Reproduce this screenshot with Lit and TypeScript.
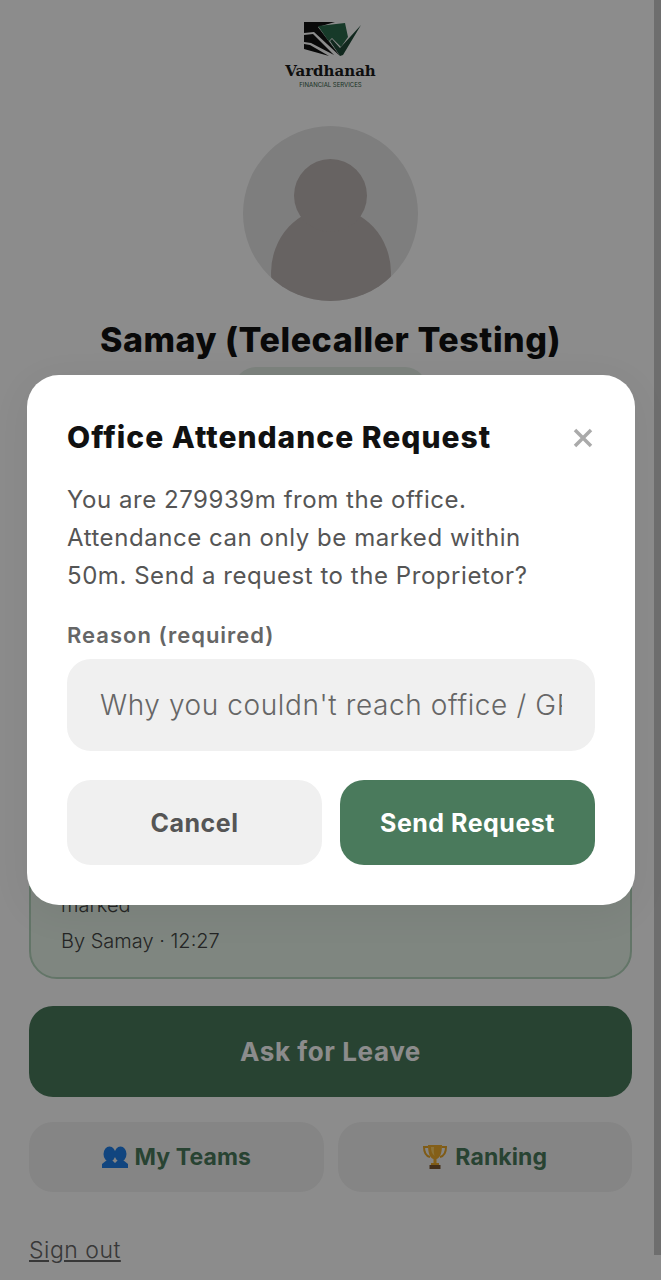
import { LitElement, html, css } from 'lit';
import { customElement } from 'lit/decorators.js';

const logo = html`<svg class="logo-mark" viewBox="0 0 64 40" aria-hidden="true">
  <path fill="#111" d="M3 2H34L17 7L39 36L13 12L3 13Z"/>
  <path fill="#111" d="M3 15L12 14L33 35L10 23L3 22Z"/>
  <path fill="#111" d="M3 24L9 25L28 36L3 29Z"/>
  <path fill="#2a6a4c" d="M17 6L44 3L47 17L40 27L31 18L28 21L38 36Z"/>
  <path fill="#1f4a37" d="M29 21L31 19L39 28L60 5L42 35L39 36Z"/>
</svg>`;

const teams = html`<svg class="emoji" viewBox="0 0 26 26" aria-hidden="true">
  <g fill="#1f7fe8">
    <ellipse cx="7.5" cy="10" rx="6" ry="7.5"/>
    <ellipse cx="18.5" cy="10" rx="6" ry="7.5"/>
    <path d="M0 24V20L5 16H10L13 19L16 16H21L26 20V24Z"/>
  </g>
</svg>`;

const trophy = html`<svg class="emoji" viewBox="0 0 26 26" aria-hidden="true">
  <path fill="none" stroke="#e8a628" stroke-width="2" d="M6 3H2C2 9 4 12 8 13M20 3H24C24 9 22 12 18 13"/>
  <path fill="#f0ae2c" d="M6 1H20C20 9 18 14 14.5 15V19H11.5V15C8 14 6 9 6 1Z"/>
  <path fill="#ffd269" d="M9 3H12C11.5 7 12 10 12.5 12C10 10 9 7 9 3Z"/>
  <path fill="#e8a628" d="M9 19H17V21H9Z"/>
  <path fill="#7a5630" d="M7.5 21H18.5V25H7.5Z"/>
</svg>`;

@customElement('app-root')
export class AppRoot extends LitElement {
  static styles = css`
    :host {
      display: block;
      position: relative;
      height: 1280px;
      overflow: hidden;
      background: #fff;
      font-family: Inter, 'Noto Sans', sans-serif;
      color: #111;
    }

    .page {
      display: flex;
      flex-direction: column;
      align-items: center;
      padding: 20px 29px 0;
    }

    .brand {
      display: flex;
      flex-direction: column;
      align-items: center;
    }

    .logo-mark {
      display: block;
      width: 64px;
      height: 40px;
      margin-left: 4px;
    }

    .brand-name {
      margin-top: 1px;
      font-family: 'DejaVu Serif', serif;
      font-weight: 700;
      font-size: 15px;
      line-height: 20px;
      color: #1a1a1a;
    }

    .brand-sub {
      font-size: 6px;
      line-height: 8px;
      color: #2f5a45;
    }

    .avatar {
      position: relative;
      width: 175px;
      height: 175px;
      margin-top: 37px;
      border-radius: 50%;
      background: #e6e6e6;
      overflow: hidden;
    }

    .avatar .head,
    .avatar .body {
      position: absolute;
      background: #bcb4b2;
      border-radius: 50%;
    }

    .avatar .head {
      left: 51px;
      top: 33px;
      width: 73px;
      height: 73px;
    }

    .avatar .body {
      left: 28px;
      top: 82px;
      width: 120px;
      height: 130px;
    }

    h1 {
      margin: 19px 0 0;
      font-size: 34px;
      line-height: 40px;
      font-weight: 800;
      letter-spacing: 0.55px;
      white-space: nowrap;
    }

    .pill {
      width: 193px;
      height: 44px;
      margin-top: 7px;
      border-radius: 22px;
      background: #e3efe6;
    }

    .status {
      box-sizing: border-box;
      align-self: stretch;
      display: flex;
      flex-direction: column;
      justify-content: flex-end;
      height: 320px;
      margin-top: 248px;
      padding: 0 30px 18px;
      border: 2px solid #b5d6bd;
      border-radius: 28px;
      background: #e7f5e9;
      color: #444;
      font-size: 20px;
      font-weight: 300;
      line-height: 36px;
    }

    .leave {
      align-self: stretch;
      height: 91px;
      margin-top: 27px;
      border-radius: 24px;
      background: #4a7a5c;
      color: #fff;
      display: flex;
      align-items: center;
      justify-content: center;
      font-size: 26px;
      font-weight: 700;
      letter-spacing: 0.6px;
    }

    .links {
      align-self: stretch;
      display: grid;
      grid-template-columns: 1fr 1fr;
      gap: 14px;
      margin-top: 25px;
    }

    .link {
      height: 70px;
      border-radius: 24px;
      background: #f2f2f2;
      color: #4a7a5c;
      display: flex;
      align-items: center;
      justify-content: center;
      gap: 7px;
      font-size: 23px;
      font-weight: 700;
      letter-spacing: 0.1px;
    }

    .emoji {
      width: 26px;
      height: 26px;
      flex: none;
    }

    .signout {
      align-self: flex-start;
      margin-top: 40px;
      font-size: 23px;
      line-height: 36px;
      font-weight: 300;
      letter-spacing: 0.5px;
      color: #666;
      text-decoration: underline;
    }

    .scrim {
      position: absolute;
      inset: 0;
      background: rgba(0, 0, 0, 0.45);
    }

    .scrollbar {
      position: absolute;
      right: 0;
      top: 0;
      width: 7px;
      height: 1255px;
      background: #6e6e6e;
    }

    .modal {
      box-sizing: border-box;
      position: absolute;
      left: 27px;
      top: 375px;
      width: 608px;
      height: 530px;
      padding: 40px 40px 0;
      border-radius: 32px;
      background: #fff;
      box-shadow: 0 8px 40px rgba(0, 0, 0, 0.06);
    }

    .modal-head {
      display: flex;
      align-items: center;
      justify-content: space-between;
      height: 44px;
    }

    h2 {
      margin: 0;
      font-size: 30px;
      font-weight: 800;
      line-height: 44px;
      letter-spacing: 1px;
      white-space: nowrap;
    }

    .close {
      width: 24px;
      height: 24px;
      margin-top: 2px;
    }

    .modal p {
      margin: 22px 0 0;
      font-size: 24px;
      line-height: 38px;
      font-weight: 400;
      letter-spacing: 0.55px;
      color: #555;
    }

    label {
      display: block;
      margin-top: 25px;
      font-size: 22px;
      line-height: 30px;
      font-weight: 600;
      letter-spacing: 1px;
      color: #666;
    }

    input {
      box-sizing: border-box;
      display: block;
      width: 100%;
      height: 92px;
      margin-top: 9px;
      padding: 0 33px;
      border: 0;
      border-radius: 24px;
      background: #f0f0f0;
      font: 300 28px Inter, 'Noto Sans', sans-serif;
      letter-spacing: 0.6px;
      outline: none;
    }

    input::placeholder {
      color: #666;
      opacity: 1;
    }

    .actions {
      display: grid;
      grid-template-columns: 1fr 1fr;
      gap: 18px;
      margin-top: 29px;
    }

    .actions button {
      height: 85px;
      border: 0;
      border-radius: 24px;
      font: 700 25px Inter, 'Noto Sans', sans-serif;
      letter-spacing: 0.5px;
    }

    .cancel {
      background: #f0f0f0;
      color: #555;
    }

    .send {
      background: #4a7a5c;
      color: #fff;
    }
  `;

  render() {
    return html`
      <div class="page">
        <div class="brand">
          ${logo}
          <div class="brand-name">Vardhanah</div>
          <div class="brand-sub">FINANCIAL SERVICES</div>
        </div>
        <div class="avatar"><div class="body"></div><div class="head"></div></div>
        <h1>Samay (Telecaller Testing)</h1>
        <div class="pill"></div>
        <div class="status">
          <div>marked</div>
          <div>By Samay · 12:27</div>
        </div>
        <div class="leave">Ask for Leave</div>
        <div class="links">
          <div class="link">${teams}<span>My Teams</span></div>
          <div class="link">${trophy}<span>Ranking</span></div>
        </div>
        <div class="signout">Sign out</div>
      </div>
      <div class="scrim"></div>
      <div class="scrollbar"></div>
      <div class="modal">
        <div class="modal-head">
          <h2>Office Attendance Request</h2>
          <svg class="close" viewBox="0 0 24 24" aria-hidden="true">
            <path d="M4 4L20 20M20 4L4 20" stroke="#aaa" stroke-width="3.5" fill="none"/>
          </svg>
        </div>
        <p>You are 279939m from the office.<br />Attendance can only be marked within<br />50m. Send a request to the Proprietor?</p>
        <label>Reason (required)</label>
        <input placeholder="Why you couldn't reach office / GPS issue" />
        <div class="actions">
          <button class="cancel">Cancel</button>
          <button class="send">Send Request</button>
        </div>
      </div>
    `;
  }
}
